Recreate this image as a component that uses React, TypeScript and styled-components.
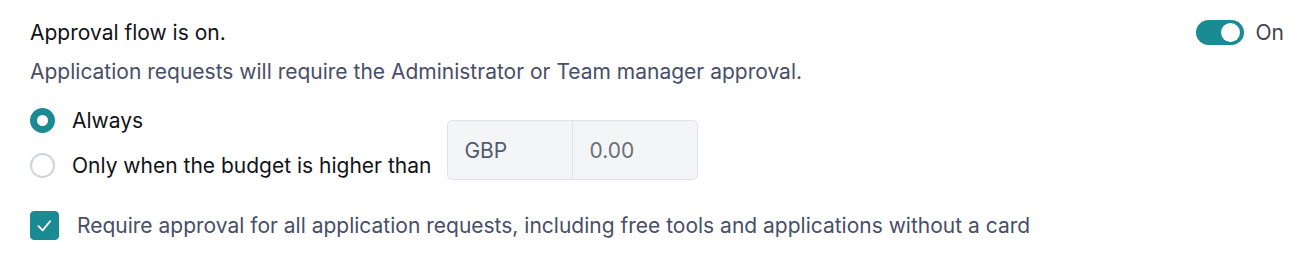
import React, { useState } from "react";
import styled, { createGlobalStyle } from "styled-components";

const GlobalStyle = createGlobalStyle`
  body {
    margin: 0;
    background: #ffffff;
    font-family: Inter, "Noto Sans", sans-serif;
  }
`;

const TEAL = "#1b8b93";

const App = () => {
  const [enabled, setEnabled] = useState(true);
  const [mode, setMode] = useState<"always" | "budget">("always");
  const [requireAll, setRequireAll] = useState(true);

  return (
    <>
      <GlobalStyle />
      <Panel>
        <Header>
          <Title>Approval flow is on.</Title>
          <ToggleWrap onClick={() => setEnabled(!enabled)}>
            <Track $on={enabled}>
              <Knob />
            </Track>
            <ToggleLabel>{enabled ? "On" : "Off"}</ToggleLabel>
          </ToggleWrap>
        </Header>
        <Description>
          Application requests will require the Administrator or Team manager
          approval.
        </Description>

        <Options>
          <OptionRow onClick={() => setMode("always")}>
            <Choice>
              <Radio $checked={mode === "always"} />
              <OptionLabel>Always</OptionLabel>
            </Choice>
          </OptionRow>
          <OptionRow $withInput onClick={() => setMode("budget")}>
            <Choice>
              <Radio $checked={mode === "budget"} />
              <OptionLabel>Only when the budget is higher than</OptionLabel>
            </Choice>
            <AmountGroup>
              <Currency>GBP</Currency>
              <Amount>0.00</Amount>
            </AmountGroup>
          </OptionRow>
        </Options>

        <CheckRow onClick={() => setRequireAll(!requireAll)}>
          <Checkbox $checked={requireAll}>
            {requireAll && (
              <svg width="29" height="29" viewBox="0 0 29 29" fill="none">
                <path
                  d="M8 15.2l4.5 4.5 8-9.8"
                  stroke="#fff"
                  strokeWidth="2"
                  strokeLinecap="round"
                  strokeLinejoin="round"
                />
              </svg>
            )}
          </Checkbox>
          <CheckLabel>
            Require approval for all application requests, including free tools
            and applications without a card
          </CheckLabel>
        </CheckRow>
      </Panel>
    </>
  );
};

export default App;

const Panel = styled.div`
  width: 1304px;
  height: 264px;
  box-sizing: border-box;
  padding: 18px 20px 0 30px;
`;

const Header = styled.div`
  display: flex;
  align-items: center;
  justify-content: space-between;
  height: 28px;
`;

const Title = styled.div`
  font-size: 21px;
  font-weight: 400;
  color: #111317;
`;

const ToggleWrap = styled.div`
  display: flex;
  align-items: center;
  gap: 12px;
  cursor: pointer;
`;

const Track = styled.div<{ $on: boolean }>`
  width: 48px;
  height: 25px;
  border-radius: 13px;
  background: ${(p) => (p.$on ? TEAL : "#d0d5dd")};
  display: flex;
  align-items: center;
  justify-content: ${(p) => (p.$on ? "flex-end" : "flex-start")};
  padding: 0 4px;
  box-sizing: border-box;
`;

const Knob = styled.div`
  width: 19px;
  height: 19px;
  border-radius: 50%;
  background: #ffffff;
`;

const ToggleLabel = styled.span`
  font-size: 21px;
  color: #3f4350;
`;

const Description = styled.div`
  margin-top: 13px;
  font-size: 21px;
  color: #484e68;
`;

const Options = styled.div`
  margin-top: 21px;
  display: flex;
  flex-direction: column;
`;

const OptionRow = styled.div<{ $withInput?: boolean }>`
  display: flex;
  align-items: flex-end;
  cursor: pointer;
  margin-top: ${(p) => (p.$withInput ? "-15px" : "0")};
`;

const Choice = styled.div`
  display: flex;
  align-items: center;
  height: 30px;
`;

const Radio = styled.span<{ $checked: boolean }>`
  width: 25px;
  height: 25px;
  box-sizing: border-box;
  border-radius: 50%;
  border: ${(p) => (p.$checked ? `7px solid ${TEAL}` : "2px solid #cfd4dc")};
  background: #ffffff;
  flex-shrink: 0;
`;

const OptionLabel = styled.span`
  margin-left: 17px;
  font-size: 21px;
  color: #111317;
`;

const AmountGroup = styled.div`
  margin-left: 16px;
  display: grid;
  grid-template-columns: 125px 124px;
  height: 60px;
  border: 1px solid #dfe2e7;
  border-radius: 5px;
  background: #f4f5f7;
  box-sizing: border-box;
  overflow: hidden;
`;

const Currency = styled.div`
  display: flex;
  align-items: center;
  padding-left: 16px;
  font-size: 21px;
  color: #545a72;
  border-right: 1px solid #dfe2e7;
`;

const Amount = styled.div`
  display: flex;
  align-items: center;
  padding-left: 16px;
  font-size: 21px;
  color: #6d7075;
`;

const CheckRow = styled.div`
  margin-top: 31px;
  display: flex;
  align-items: center;
  cursor: pointer;
`;

const Checkbox = styled.span<{ $checked: boolean }>`
  width: 29px;
  height: 29px;
  box-sizing: border-box;
  border-radius: 4px;
  background: ${(p) => (p.$checked ? TEAL : "#ffffff")};
  border: 1px solid ${(p) => (p.$checked ? TEAL : "#cfd4dc")};
  display: flex;
  align-items: center;
  justify-content: center;
  flex-shrink: 0;
  overflow: hidden;
`;

const CheckLabel = styled.span`
  margin-left: 18px;
  font-size: 21px;
  color: #484e68;
`;
